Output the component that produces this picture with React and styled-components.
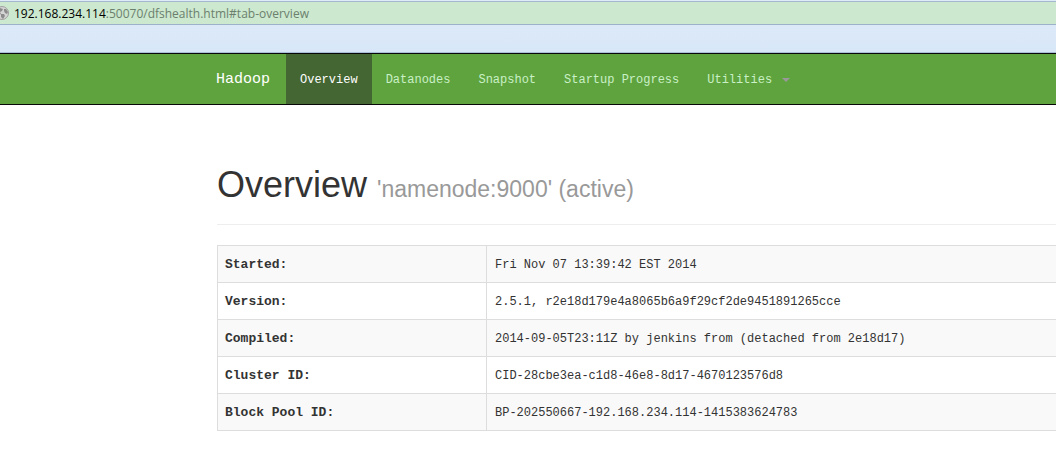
import React from "react";
import styled, { createGlobalStyle } from "styled-components";

const GlobalStyle = createGlobalStyle`
  *, *::before, *::after { box-sizing: border-box; }
  body {
    margin: 0;
    background: #fff;
    color: #333;
    font: 12px/20px "Liberation Mono", monospace;
    overflow-x: hidden;
  }
`;

const Chrome = styled.header`
  background: linear-gradient(#dfebf7, #d8e7f8);
  border-bottom: 1px solid #a9bfd9;
  padding: 1px 0 27px;
`;

const AddressBar = styled.div`
  display: flex;
  align-items: center;
  height: 24px;
  gap: 5px;
  background: #cce8cf;
  border-top: 1px solid #a3b8cc;
  border-bottom: 1px solid #9cb2cb;
  overflow: hidden;
`;

const GlobeIcon = styled.svg`
  flex: none;
  width: 14px;
  height: 14px;
  margin-left: -5px;
`;

const Address = styled.div`
  font: 12px/20px "Open Sans", sans-serif;
  padding-top: 1px;
  color: #6b806d;
`;

const Host = styled.span`
  color: #000;
`;

const Navbar = styled.nav`
  display: flex;
  min-height: 52px;
  padding-left: 201px;
  background: #5fa33e;
  border-top: 1px solid #080808;
  border-bottom: 1px solid #080808;
`;

const Brand = styled.a`
  padding: 16px 16px 14px 15px;
  font-size: 15px;
  line-height: 20px;
  color: #fff;
  text-decoration: none;
`;

const NavList = styled.ul`
  display: flex;
  margin: 0;
  padding: 0;
  list-style: none;
`;

const NavLink = styled.a`
  display: flex;
  align-items: center;
  gap: 10px;
  padding: 16px 14px 14px;
  color: ${(p) => (p.$active ? "#fff" : "#c9f0c6")};
  background: ${(p) => (p.$active ? "#446633" : "transparent")};
  text-decoration: none;
  white-space: nowrap;
`;

const Caret = styled.span`
  border: 4px solid transparent;
  border-top-color: #999;
  border-bottom: 0;
`;

const Main = styled.main`
  padding: 60px 0 32px 217px;
`;

const PageHeader = styled.div`
  padding-bottom: 19px;
  margin-bottom: 20px;
  border-bottom: 1px solid #eee;
`;

const Title = styled.h1`
  margin: 0;
  font: 400 36px/40px "Liberation Sans", Arial, sans-serif;
`;

const Subtitle = styled.small`
  font-size: 23px;
  line-height: 24px;
  color: #999;
`;

const InfoTable = styled.table`
  width: 100%;
  border-collapse: collapse;
`;

const Row = styled.tr`
  border: 1px solid #ddd;
  border-right: 0;
  &:nth-child(odd) { background: #f9f9f9; }
`;

const Label = styled.th`
  width: 269px;
  padding: 9px 8px 7px 7px;
  border-right: 1px solid #ddd;
  font-size: 13px;
  line-height: 20px;
  text-align: left;
`;

const Value = styled.td`
  padding: 9px 8px 7px;
`;

const links = ["Overview", "Datanodes", "Snapshot", "Startup Progress", "Utilities"];

const details = [
  ["Started:", "Fri Nov 07 13:39:42 EST 2014"],
  ["Version:", "2.5.1, r2e18d179e4a8065b6a9f29cf2de9451891265cce"],
  ["Compiled:", "2014-09-05T23:11Z by jenkins from (detached from 2e18d17)"],
  ["Cluster ID:", "CID-28cbe3ea-c1d8-46e8-8d17-4670123576d8"],
  ["Block Pool ID:", "BP-202550667-192.168.234.114-1415383624783"],
];

export default function App() {
  return (
    <>
      <GlobalStyle />
      <Chrome>
        <AddressBar>
          <GlobeIcon viewBox="0 0 14 14" aria-hidden="true">
            <circle cx="7" cy="7" r="6.5" fill="#d4d4d4" stroke="#a0a0a0" />
            <path d="M2 4l3-2 3 1-1 2-2 1 1 2-2 1-2-2zM9 3l2 0 2 3-1 2-2-1-1-2zM6 8l3 0 1 2-2 3-2-2z" fill="#8c8c8c" />
          </GlobeIcon>
          <Address>
            <Host>192.168.234.114</Host>:50070/dfshealth.html#tab-overview
          </Address>
        </AddressBar>
      </Chrome>
      <Navbar>
        <Brand href="#">Hadoop</Brand>
        <NavList>
          {links.map((name, i) => (
            <li key={name}>
              <NavLink href="#" $active={i === 0}>
                {name}
                {name === "Utilities" && <Caret />}
              </NavLink>
            </li>
          ))}
        </NavList>
      </Navbar>
      <Main>
        <PageHeader>
          <Title>
            Overview <Subtitle>'namenode:9000' (active)</Subtitle>
          </Title>
        </PageHeader>
        <InfoTable>
          <tbody>
            {details.map(([label, value]) => (
              <Row key={label}>
                <Label scope="row">{label}</Label>
                <Value>{value}</Value>
              </Row>
            ))}
          </tbody>
        </InfoTable>
      </Main>
    </>
  );
}
